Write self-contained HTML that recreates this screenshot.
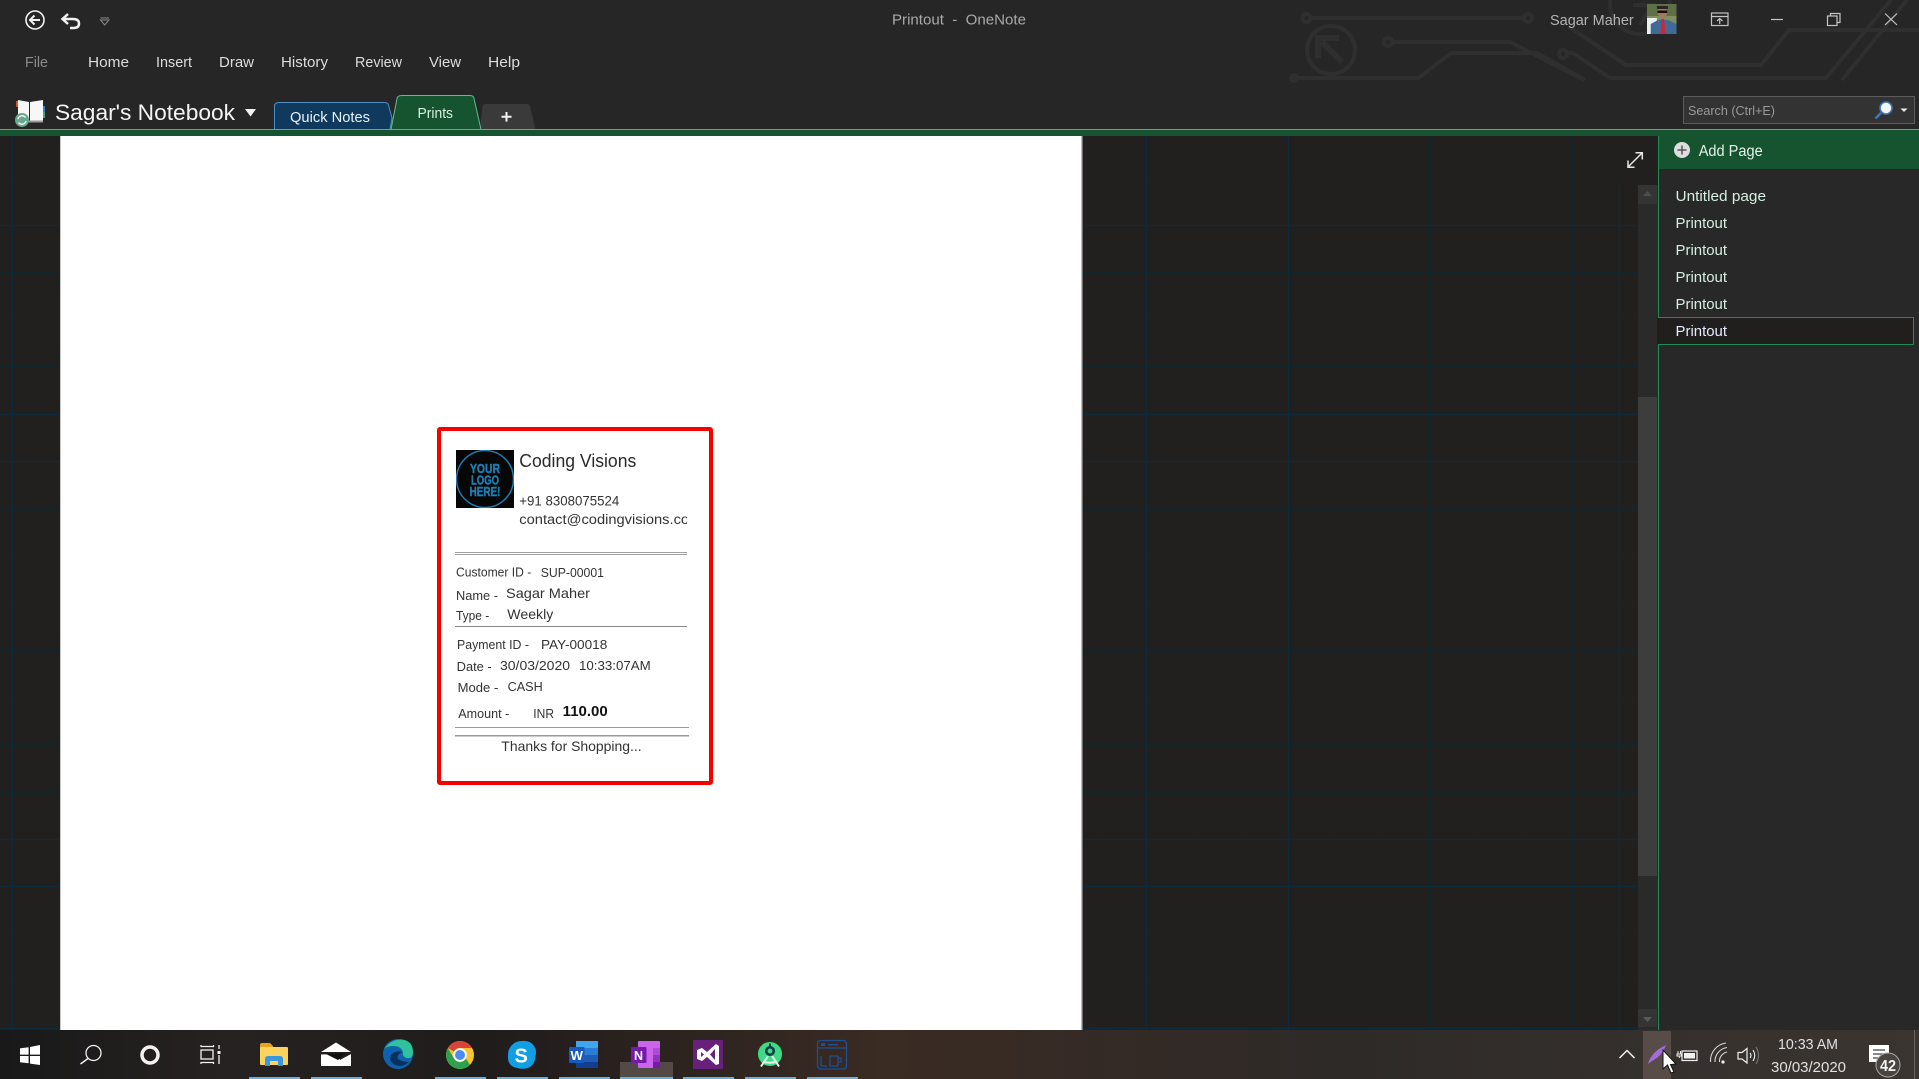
<!DOCTYPE html>
<html lang="en">
<head>
<meta charset="utf-8">
<title>Printout - OneNote</title>
<style>
html,body{margin:0;padding:0;width:1919px;height:1079px;overflow:hidden;background:#262626}
svg{display:block}
text{font-family:"Liberation Sans",sans-serif;white-space:pre}
.m{font-size:15px;fill:#dcdcdc}
.p{font-size:15px;fill:#d6efe0}
.r{font-size:12.5px;fill:#333}
.s{font-size:14px;fill:#333}
</style>
</head>
<body>
<svg width="1919" height="1079" viewBox="0 0 1919 1079" xmlns="http://www.w3.org/2000/svg">
<defs>
<linearGradient id="tb" x1="0" x2="1" y1="0" y2="0">
<stop offset="0" stop-color="#191919"/><stop offset=".12" stop-color="#262221"/><stop offset=".25" stop-color="#1f1c1c"/><stop offset=".46" stop-color="#3a2b23"/><stop offset=".7" stop-color="#2e2a28"/><stop offset="1" stop-color="#3b3531"/>
</linearGradient>
<clipPath id="cc"><rect x="515" y="505" width="172" height="26"/></clipPath>
<clipPath id="av"><rect x="1580" y="4" width="24" height="30"/></clipPath>
<clipPath id="lg"><rect x="456" y="450" width="58" height="58"/></clipPath>
</defs>

<!-- title bar -->
<rect width="1919" height="130" fill="#262626"/>
<g fill="none" stroke="#2f2f2f" stroke-width="4">
<circle cx="1306.500" cy="18" r="4"/><path d="M1310 18H1524"/><circle cx="1528" cy="18" r="4"/>
<path d="M1569 27L1626 65H1761L1789 30H1919"/>
<circle cx="1388" cy="42" r="4"/><path d="M1392 42H1510L1584 80"/>
<circle cx="1294" cy="78" r="3"/><path d="M1290 78H1418.500L1451 53H1537L1585 80"/>
<circle cx="1563" cy="54" r="4"/><path d="M1567 53H1573L1610 78H1826L1891 0"/>
<path d="M1842 80L1907 0"/>
<circle cx="1331" cy="50" r="24"/><path d="M1342 62L1322 42M1318 58V38H1339" stroke-width="6"/>
<circle cx="1640" cy="4" r="30"/><path d="M1633 5H1652L1640 25"/>
</g>

<!-- qat -->
<g fill="none" stroke="#f2f2f2">
<circle cx="35" cy="20" r="9" stroke-width="1.600"/>
<path d="M40 20H30.500M34.500 15.500L30 20L34.500 24.500" stroke-width="2"/>
<path d="M63 19H73Q79 19 79 23.500Q79 28 73.500 28H70M68 14L62.500 19L68 24" stroke-width="2.500"/>
<path d="M100.500 20H109L104.700 25ZM100.500 18H109" stroke="#888" stroke-width="1"/>
</g>

<text class="m" x="892" y="24.500" style="fill:#a9a9a9" textLength="134" lengthAdjust="spacingAndGlyphs">Printout  -  OneNote</text>

<!-- menus -->
<text class="m" style="fill:#8c8c8c" x="25" y="67" textLength="23" lengthAdjust="spacingAndGlyphs">File</text>
<text class="m" x="88" y="67" textLength="41" lengthAdjust="spacingAndGlyphs">Home</text>
<text class="m" x="156" y="67" textLength="36" lengthAdjust="spacingAndGlyphs">Insert</text>
<text class="m" x="219" y="67" textLength="35" lengthAdjust="spacingAndGlyphs">Draw</text>
<text class="m" x="281" y="67" textLength="47" lengthAdjust="spacingAndGlyphs">History</text>
<text class="m" x="355" y="67" textLength="47" lengthAdjust="spacingAndGlyphs">Review</text>
<text class="m" x="429" y="67" textLength="32" lengthAdjust="spacingAndGlyphs">View</text>
<text class="m" x="488" y="67" textLength="32" lengthAdjust="spacingAndGlyphs">Help</text>

<!-- notebook icon -->
<rect x="16" y="101" width="3" height="6" fill="#d8572a"/>
<rect x="42" y="106" width="3" height="6" fill="#3f7fbf"/><rect x="42" y="112" width="3" height="6" fill="#4f9a8a"/>
<polygon points="18,100 29,102 29,122 18,122" fill="#f7f7f7"/>
<polygon points="30,102 43,100 43,122 30,122" fill="#f7f7f7"/>
<rect x="18" y="120.500" width="25" height="2" fill="#9a9a9a"/>
<circle cx="22" cy="120" r="7" fill="#68a890"/>
<path d="M18 119A4.200 4.200 0 0 1 25.500 117.500M26 121A4.200 4.200 0 0 1 18.500 122.500" fill="none" stroke="#fff" stroke-width="1.300"/>

<text x="55" y="120" font-size="22.500" fill="#f4f4f4" textLength="180" lengthAdjust="spacingAndGlyphs">Sagar's Notebook</text>
<path d="M245 109H256L250.500 116.500Z" fill="#f2f2f2"/>

<!-- tabs -->
<path d="M535.500 129.500L530 106Q529.500 104 526 104H486Q483 104 482.500 106L480 129.500Z" fill="#3a3a3a"/>
<path d="M274.500 129.500V106Q274.500 102.500 279 102.500H384Q388 102.500 388.500 105L392 118L390 129.500Z" fill="#0f3a5d" stroke="#4c8fc2" stroke-width="1"/>
<path d="M391 129.500L397 98.500Q397.500 95.500 402 95.500H470Q473.500 95.500 474 98.500L481 129.500Z" fill="#16532f" stroke="#62bb8d" stroke-width="1"/>
<text x="290" y="122" font-size="15" fill="#e8f1f8" textLength="80" lengthAdjust="spacingAndGlyphs">Quick Notes</text>
<text x="417.500" y="118" font-size="15" fill="#d8efe2" textLength="35.500" lengthAdjust="spacingAndGlyphs">Prints</text>
<path d="M501.500 116.800H511.500M506.500 112V121.600" stroke="#f2f2f2" stroke-width="2" fill="none"/>

<!-- right of title -->
<text class="m" style="fill:#b4b4b4" x="1550" y="25" textLength="83.700" lengthAdjust="spacingAndGlyphs">Sagar Maher</text>
<g transform="translate(1647 0) scale(1.230 1) translate(-1580 0)" clip-path="url(#av)">
<rect x="1580" y="4" width="24" height="30" fill="#7f8f62"/>
<rect x="1580" y="4" width="24" height="12" fill="#5f7046"/>
<rect x="1580" y="18" width="8" height="16" fill="#eceff0"/>
<path d="M1583 34V24L1589 20H1597L1604 24V34Z" fill="#3f6b96"/>
<ellipse cx="1592.500" cy="12" rx="4" ry="5.500" fill="#a8775b"/>
<rect x="1588" y="6" width="9" height="3" fill="#2c2420"/>
<rect x="1588.500" y="10.500" width="8" height="2.500" fill="#111"/>
<path d="M1591.500 19H1594L1595 34H1591Z" fill="#c9283e"/>
</g>
<g fill="none" stroke="#c4c4c4" stroke-width="1.200">
<rect x="1711.500" y="13" width="16.500" height="12.500"/><path d="M1711.500 16.500H1728M1719.700 24V18.500M1717 21L1719.700 18.500L1722.500 21"/>
<path d="M1771 19.500H1783"/>
<rect x="1827.500" y="16" width="9.500" height="9.500"/><path d="M1830.500 16V13.500H1840V22.500H1837"/>
<path d="M1885 13.500L1897 25M1897 13.500L1885 25"/>
</g>

<!-- search -->
<rect x="1683.500" y="96.500" width="231" height="27" fill="#333" stroke="#5c5c5c"/>
<text x="1688" y="115" font-size="13" fill="#9a9a9a" textLength="87" lengthAdjust="spacingAndGlyphs">Search (Ctrl+E)</text>
<circle cx="1886" cy="108" r="6" fill="#f5f5f5" stroke="#3f78b5" stroke-width="1.600"/>
<path d="M1881 113L1875.500 118.500" stroke="#3f78b5" stroke-width="2.500"/>
<path d="M1900.500 108.500H1907.500L1904 112Z" fill="#e8e8e8"/>

<!-- green bar -->
<rect x="0" y="129" width="1919" height="1" fill="#4fb382"/>
<rect x="0" y="130" width="1919" height="6" fill="#16532f"/>

<!-- canvas -->
<rect x="0" y="136" width="1659" height="894" fill="#22201f"/>
<g stroke="#11262f" stroke-width="1" fill="none">
<path d="M0 177.500H1610M0 272.500H1638M0 319.500H1638M0 366.500H1638M0 508.500H1638M0 555.500H1638M0 603.500H1638M0 650.500H1638M0 697.500H1638M0 744.500H1638M0 792.500H1638M0 933.500H1638M0 981.500H1638"/>
<path d="M1099.500 136V1030M1193.500 136V1030M1241.500 136V1030M1335.500 136V1030M1383.500 136V1030M1430.500 136V1030M1477.500 136V1030M1525.500 136V1030M1572.500 136V1030"/>
</g>
<g stroke="#0e2b3d" stroke-width="1.300" fill="none">
<path d="M0 225.500H1638M0 414.500H1638M0 461.500H1638M0 839.500H1638M0 886.500H1638M0 1028.500H1638"/>
<path d="M12.500 136V1030M1146.500 136V1030M1288.500 136V1030M1619.500 184V1030"/>
</g>

<!-- page -->
<rect x="60" y="136" width="1022" height="894" fill="#fff"/>
<rect x="60" y="136" width="1" height="894" fill="#c8c8c8"/>
<rect x="1081" y="136" width="1.500" height="894" fill="#bdbdbd"/>

<!-- receipt -->
<rect x="439" y="429" width="272" height="354" fill="#fff" stroke="#f60000" stroke-width="4" rx="1"/>
<rect x="456" y="450" width="58" height="58" fill="#070707"/>
<g clip-path="url(#lg)">
<circle cx="485" cy="479" r="28.500" fill="none" stroke="#1f7fb3" stroke-width="1.500"/>
<text x="470" y="473" font-size="12.500" font-weight="700" fill="#1d80b5" stroke="#1d80b5" stroke-width=".4" textLength="30" lengthAdjust="spacingAndGlyphs">YOUR</text>
<text x="471" y="484.500" font-size="12.500" font-weight="700" fill="#1d80b5" stroke="#1d80b5" stroke-width=".4" textLength="28" lengthAdjust="spacingAndGlyphs">LOGO</text>
<text x="469.500" y="496" font-size="12.500" font-weight="700" fill="#1d80b5" stroke="#1d80b5" stroke-width=".4" textLength="31" lengthAdjust="spacingAndGlyphs">HERE!</text>
</g>
<text x="519.300" y="467" font-size="18" fill="#2a2a2a" textLength="117" lengthAdjust="spacingAndGlyphs">Coding Visions</text>
<text class="s" x="519.300" y="505.300" textLength="100" lengthAdjust="spacingAndGlyphs" style="font-size:13.500px">+91 8308075524</text>
<g clip-path="url(#cc)"><text class="s" x="519.300" y="524" textLength="182" lengthAdjust="spacingAndGlyphs" style="font-size:13.500px">contact@codingvisions.com</text></g>
<g stroke="#a0a0a0" stroke-width="1" fill="none">
<path d="M455 552.500H687M455 554.500H687"/>
<path d="M455 626.500H687" stroke="#8a8a8a"/>
<path d="M455 727.500H689M455 735.500H689" stroke="#999"/>
<path d="M455 736.500H689" stroke="#ccc"/>
</g>
<text class="r" x="456" y="576.700" textLength="75.300" lengthAdjust="spacingAndGlyphs">Customer ID -</text>
<text class="r" x="540.700" y="577" textLength="63.300" lengthAdjust="spacingAndGlyphs">SUP-00001</text>
<text class="r" x="456" y="600" textLength="42" lengthAdjust="spacingAndGlyphs">Name -</text>
<text class="s" x="506" y="598" textLength="84" lengthAdjust="spacingAndGlyphs">Sagar Maher</text>
<text class="r" x="456" y="620" textLength="33.300" lengthAdjust="spacingAndGlyphs">Type -</text>
<text class="s" x="507.300" y="619" textLength="46" lengthAdjust="spacingAndGlyphs">Weekly</text>
<text class="r" x="457" y="649" textLength="72" lengthAdjust="spacingAndGlyphs">Payment ID -</text>
<text class="r" x="541" y="649" textLength="66.300" lengthAdjust="spacingAndGlyphs">PAY-00018</text>
<text class="r" x="456.700" y="671" textLength="35" lengthAdjust="spacingAndGlyphs">Date -</text>
<text class="r" x="500" y="670" textLength="70" lengthAdjust="spacingAndGlyphs">30/03/2020</text>
<text class="r" x="579" y="670" textLength="71.700" lengthAdjust="spacingAndGlyphs">10:33:07AM</text>
<text class="r" x="457.700" y="692" textLength="40.600" lengthAdjust="spacingAndGlyphs">Mode -</text>
<text class="r" x="507.700" y="691" textLength="35" lengthAdjust="spacingAndGlyphs">CASH</text>
<text class="r" x="458.300" y="718" textLength="51" lengthAdjust="spacingAndGlyphs">Amount -</text>
<text class="r" x="533.300" y="718" textLength="20.700" lengthAdjust="spacingAndGlyphs">INR</text>
<text x="562.700" y="716" font-size="14.500" font-weight="700" fill="#111" textLength="45" lengthAdjust="spacingAndGlyphs">110.00</text>
<text class="s" x="501.300" y="751" textLength="140.400" lengthAdjust="spacingAndGlyphs">Thanks for Shopping...</text>

<!-- expand -->
<g fill="none" stroke="#e6e6e6" stroke-width="1.500">
<path d="M1628 167L1642 153M1635.500 152.800H1642.300V159.500M1628 160.500V167.300H1634.500"/>
</g>

<!-- scrollbar -->
<rect x="1638" y="185" width="20" height="845" fill="#2a2a2a"/>
<rect x="1638" y="185" width="19" height="19" fill="#343434"/>
<path d="M1643 196L1647.500 191L1652 196Z" fill="#4e4e4e"/>
<rect x="1638" y="397" width="19" height="479" fill="#3d3d3d"/>
<rect x="1638" y="1009" width="19" height="18" fill="#343434"/>
<path d="M1643 1017L1647.500 1022L1652 1017Z" fill="#5a5a5a"/>

<!-- sidebar -->
<rect x="1659" y="136" width="260" height="894" fill="#282828"/>
<rect x="1659" y="130" width="260" height="39" fill="#16532f"/>
<rect x="1658" y="136" width="1" height="894" fill="#1f8a56"/>
<circle cx="1682" cy="150" r="8" fill="#dedede"/>
<path d="M1677.500 150H1686.500M1682 145.500V154.500" stroke="#555" stroke-width="1.500"/>
<text x="1698.700" y="156" font-size="15.500" fill="#e4f2ea" textLength="64" lengthAdjust="spacingAndGlyphs">Add Page</text>
<text class="p" x="1675.500" y="201" textLength="90.500" lengthAdjust="spacingAndGlyphs">Untitled page</text>
<text class="p" x="1675.500" y="228" textLength="51.500" lengthAdjust="spacingAndGlyphs">Printout</text>
<text class="p" x="1675.500" y="255" textLength="51.500" lengthAdjust="spacingAndGlyphs">Printout</text>
<text class="p" x="1675.500" y="282" textLength="51.500" lengthAdjust="spacingAndGlyphs">Printout</text>
<text class="p" x="1675.500" y="309" textLength="51.500" lengthAdjust="spacingAndGlyphs">Printout</text>
<rect x="1657" y="318" width="256" height="26" fill="#201f1e"/>
<path d="M1658 317.500H1913.500V344.500H1658" fill="none" stroke="#1f8a56" stroke-width="1"/>
<text class="p" style="fill:#e4ecff" x="1675.500" y="336" textLength="51.500" lengthAdjust="spacingAndGlyphs">Printout</text>

<!-- taskbar -->
<rect x="0" y="1030" width="1919" height="49" fill="url(#tb)"/>
<g fill="#fff">
<polygon points="20,1048.400 28.600,1047.200 28.600,1054.600 20,1054.600"/>
<polygon points="30,1047 40,1045 40,1054.600 30,1054.600"/>
<polygon points="20,1056 28.600,1056 28.600,1063.300 20,1062.200"/>
<polygon points="30,1056 40,1056 40,1065 30,1063.600"/>
</g>
<g fill="none" stroke="#f2f2f2">
<circle cx="93.500" cy="1053" r="7.500" stroke-width="1.300"/>
<path d="M88 1058.500L80.500 1064" stroke-width="1.500"/>
<circle cx="150" cy="1055" r="8" stroke-width="3.500"/>
<rect x="201" y="1050" width="12" height="9" stroke-width="1.300"/>
<path d="M200.500 1046.500H214M200.500 1062.500H214M201 1045V1047M213.500 1045V1047M201 1062V1064M213.500 1062V1064" stroke-width="1.200"/>
<path d="M219 1045V1049M219 1055V1064" stroke-width="1.300"/>
</g>
<rect x="217.500" y="1051" width="3" height="3" fill="#f2f2f2"/>

<!-- explorer -->
<path d="M260 1045Q260 1043 262 1043H270L273 1046V1049H260Z" fill="#e5a21a"/>
<rect x="260" y="1047" width="28" height="18" rx="1" fill="#fcd35d"/>
<path d="M265 1066V1059Q265 1056 268 1056H280Q283 1056 283 1059V1066H278V1061H270V1066Z" fill="#3a96dd"/>

<!-- mail -->
<path d="M321 1052L336 1042.500L351 1052Z" fill="#fff"/>
<path d="M321 1054.500L337 1054V1054L340 1060L351 1054V1066H321Z" fill="#fff"/>
<path d="M325 1053.500H345L338 1060Z" fill="#101010"/>

<!-- edge -->
<circle cx="398" cy="1054" r="15" fill="#0f62ae"/>
<path d="M384 1049Q391 1039 402 1039.500Q413 1041 413 1052Q413 1059 407 1058Q402 1057 403 1052Q401 1046 393 1046Q387 1046 384 1049Z" fill="#2fc19c"/>
<path d="M402 1052Q395 1050 391 1055Q388 1061 395 1065Q402 1068 409 1062Q403 1062 398 1059Q396 1055 402 1052Z" fill="#07315c"/>

<!-- chrome -->
<circle cx="460" cy="1055" r="14" fill="#f7c331"/>
<path d="M447.900 1048A14 14 0 0 1 472.100 1048H460A7 7 0 0 0 453.900 1051.500Z" fill="#dc4438"/>
<path d="M447.900 1048L454 1058.500A7 7 0 0 0 460 1062L454 1067.600A14 14 0 0 1 447.900 1048Z" fill="#2ea04f"/>
<path d="M453.800 1067.500L460 1062A7 7 0 0 0 466 1058.500L470 1065A14 14 0 0 1 453.800 1067.500Z" fill="#2ea04f"/>
<circle cx="460" cy="1055" r="6.800" fill="#fff"/><circle cx="460" cy="1055" r="5" fill="#4b8bf5"/>

<!-- skype -->
<path d="M508 1055A13.500 13.500 0 0 1 522 1041Q530 1040 534 1046Q537 1050 535.500 1056Q535 1064 530 1067Q524 1070 517 1068Q507 1066 508 1055Z" fill="#0f9fe2"/>
<text x="514.500" y="1062.500" font-size="20" font-weight="700" fill="#fff">S</text>

<!-- word -->
<rect x="576" y="1041" width="22" height="27" rx="1" fill="#1c5db8"/>
<rect x="576" y="1041" width="22" height="7" fill="#41a5ee"/>
<rect x="576" y="1048" width="22" height="7" fill="#2b7cd3"/>
<rect x="576" y="1062" width="22" height="6" fill="#103f91"/>
<rect x="569" y="1047" width="15.500" height="16" rx="1" fill="#185abd"/>
<text x="570.500" y="1060" font-size="12.500" font-weight="700" fill="#fff" textLength="12.500" lengthAdjust="spacingAndGlyphs">W</text>

<!-- onenote active -->
<rect x="620" y="1062" width="53" height="17" fill="#534a46"/>
<rect x="638" y="1041" width="22" height="27" rx="1" fill="#ca64ea"/>
<rect x="653" y="1048" width="7" height="7" fill="#ae4bd5"/><rect x="653" y="1055" width="7" height="7" fill="#9332bf"/><rect x="653" y="1062" width="7" height="6" fill="#7719aa"/>
<rect x="631" y="1047" width="15.500" height="16" rx="1" fill="#7719aa"/>
<text x="634" y="1060" font-size="12.500" font-weight="700" fill="#fff">N</text>

<!-- vs -->
<rect x="693" y="1040" width="30" height="29" fill="#68217a"/>
<path d="M697 1050L702 1048L707 1052L716 1044L719 1046V1064L716 1065L707 1057L702 1061L697 1059ZM701 1052V1057L704 1054.500ZM715 1049L710 1054.500L715 1060Z" fill="#fff" fill-rule="evenodd"/>

<!-- android studio -->
<circle cx="770" cy="1054" r="12" fill="#3ddc84"/>
<circle cx="770" cy="1051" r="3.800" fill="none" stroke="#0d3a4a" stroke-width="2.500"/>
<rect x="769" y="1043.500" width="2" height="3" fill="#0d3a4a"/>
<path d="M768 1056L761 1066.500M772 1056L779 1066.500M763 1061.500Q770 1064 777 1061.500" fill="none" stroke="#e8f4ee" stroke-width="2"/>

<!-- last icon -->
<g fill="none" stroke="#1f4f91" stroke-width="1.300">
<rect x="817.500" y="1040.500" width="29" height="28.500" rx="3"/>
<path d="M817.500 1048H846.500"/>
<path d="M830 1066V1056H838V1066ZM838 1058H841V1062H838M821 1056V1066H827"/>
</g>
<rect x="821" y="1043" width="4" height="3" fill="#1f4f91"/><rect x="828" y="1044" width="10" height="1.500" fill="#1f4f91"/>

<!-- underlines -->
<g fill="#6aaedb">
<rect x="249" y="1077" width="51" height="2"/><rect x="311" y="1077" width="51" height="2"/><rect x="435" y="1077" width="51" height="2"/>
<rect x="497" y="1077" width="51" height="2"/><rect x="559" y="1077" width="51" height="2"/><rect x="620" y="1077" width="53" height="2"/>
<rect x="683" y="1077" width="51" height="2"/><rect x="745" y="1077" width="51" height="2"/><rect x="807" y="1077" width="51" height="2"/>
</g>

<!-- tray -->
<rect x="1643" y="1031" width="28" height="48" fill="#574c47"/>
<path d="M1619.500 1058L1627 1050.500L1634.500 1058" fill="none" stroke="#f0f0f0" stroke-width="1.500"/>
<path d="M1648 1064Q1651 1052 1666 1045Q1662 1056 1652 1061Z" fill="#a56bdc"/>
<path d="M1663 1050V1069L1667.500 1065L1671 1073L1674 1072L1670.500 1064.500L1676 1064Z" fill="#fff" stroke="#111" stroke-width="1"/>
<g fill="none" stroke="#f0f0f0">
<rect x="1682" y="1051" width="15" height="9.500" stroke-width="1.200"/>
<path d="M1678 1051V1054M1680.500 1051V1054M1677 1054H1681.500V1056H1677ZM1679.300 1056V1058" stroke-width="1"/>
<path d="M1726 1043A18 18 0 0 0 1710.500 1062M1727 1047.500A14 14 0 0 0 1715 1062M1727 1052A9.500 9.500 0 0 0 1719.500 1062" stroke-width="1.100" stroke="#d8d8d8"/>
<path d="M1738 1052.500H1742L1747 1048.500V1063L1742 1059H1738Z" stroke-width="1.200"/>
<path d="M1750 1053Q1752 1055.500 1750 1058M1753 1050Q1756.500 1055.500 1753 1061" stroke-width="1.100"/>
<path d="M1756 1047Q1761 1055.500 1756 1064" stroke="#777" stroke-width="1.100"/>
</g>
<circle cx="1723" cy="1062" r="1.600" fill="#f0f0f0"/>
<rect x="1684" y="1053" width="11" height="5.500" fill="#f0f0f0"/>
<text x="1778" y="1049" font-size="15" fill="#e0e0e0" textLength="60" lengthAdjust="spacingAndGlyphs">10:33 AM</text>
<text x="1771" y="1072" font-size="15" fill="#e0e0e0" textLength="75" lengthAdjust="spacingAndGlyphs">30/03/2020</text>
<rect x="1869" y="1045" width="20" height="17" fill="#fff"/>
<path d="M1873 1050H1885M1873 1054H1885M1873 1058H1881" stroke="#444" stroke-width="1.200"/>
<circle cx="1888" cy="1065" r="12" fill="#4a4440" stroke="#a8a8a8" stroke-width="1"/>
<text x="1880" y="1071" font-size="15.500" font-weight="700" fill="#f2f2f2" textLength="16" lengthAdjust="spacingAndGlyphs">42</text>
<rect x="1914" y="1030" width="1" height="49" fill="#6a6560"/>
</svg>
</body>
</html>
